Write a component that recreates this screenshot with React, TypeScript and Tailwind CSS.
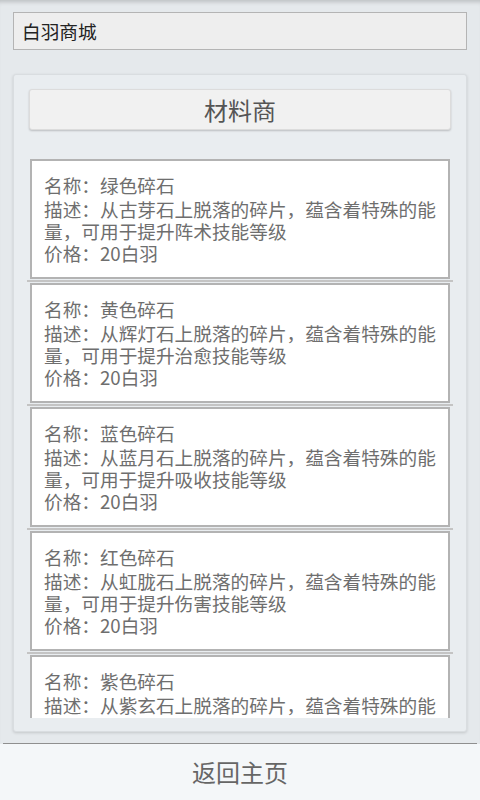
const ITEMS = [
  { name: '绿色碎石', from: '古芽石', skill: '阵术' },
  { name: '黄色碎石', from: '辉灯石', skill: '治愈' },
  { name: '蓝色碎石', from: '蓝月石', skill: '吸收' },
  { name: '红色碎石', from: '虹胧石', skill: '伤害' },
  { name: '紫色碎石', from: '紫玄石', skill: '防御' },
]

function ItemCard({ name, from, skill }: { name: string; from: string; skill: string }) {
  return (
    <div className="mx-[3px] h-[120px] shrink-0 bg-white border-2 border-[#b3b3b3] pt-[13px] pl-[12px] pr-[6px] text-[18.67px] leading-[22px] text-[#6e6e6e]">
      <p className="mb-[2px] whitespace-nowrap">名称：{name}</p>
      <p>
        描述：从{from}上脱落的碎片，蕴含着特殊的能量，可用于提升{skill}技能等级
      </p>
      <p className="whitespace-nowrap">价格：20白羽</p>
    </div>
  )
}

export default function App() {
  return (
    <div
      className="w-[480px] h-[800px] flex flex-col bg-[#e5e9ec] shadow-[inset_0_5px_4px_-3px_rgba(0,0,0,0.18)]"
      style={{ fontFamily: '"Noto Sans CJK SC", "Noto Sans", sans-serif' }}
    >
      <div className="px-[13px] pt-[12px]">
        <div className="h-[38px] flex items-center pl-[8px] bg-[#eeeeee] border border-[#b4b4b4] text-[18.67px] text-[#222]">
          白羽商城
        </div>
      </div>

      <div className="mx-[13px] mt-[24px] h-[658px] flex flex-col rounded-[3px] bg-[#e9edf0] border border-[#d9dde0] shadow-[0_1px_3px_rgba(0,0,0,0.15)] pt-[14px] px-[13px] pb-[13px]">
        <div className="mx-[2px] h-[41px] shrink-0 flex items-center justify-center rounded-[3px] bg-[#f1f1f1] border border-[#dcdcdc] shadow-[0_1px_2px_rgba(0,0,0,0.2)] text-[24px] text-[#555]">
          材料商
        </div>
        <div className="mt-[29px] flex-1 min-h-0 overflow-hidden flex flex-col">
          {ITEMS.map((it) => (
            <div key={it.name} className="shrink-0 flex flex-col">
              <ItemCard {...it} />
              <div className="h-[2px] my-[1px] bg-[#c4c4c4]" />
            </div>
          ))}
        </div>
      </div>

      <div className="mt-[11px] mx-[3px] border-t-[1.5px] border-[#8f8f8f]" />
      <div className="flex-1 flex items-center justify-center bg-[#f4f7f9] text-[24px] text-[#666]">
        返回主页
      </div>
    </div>
  )
}
